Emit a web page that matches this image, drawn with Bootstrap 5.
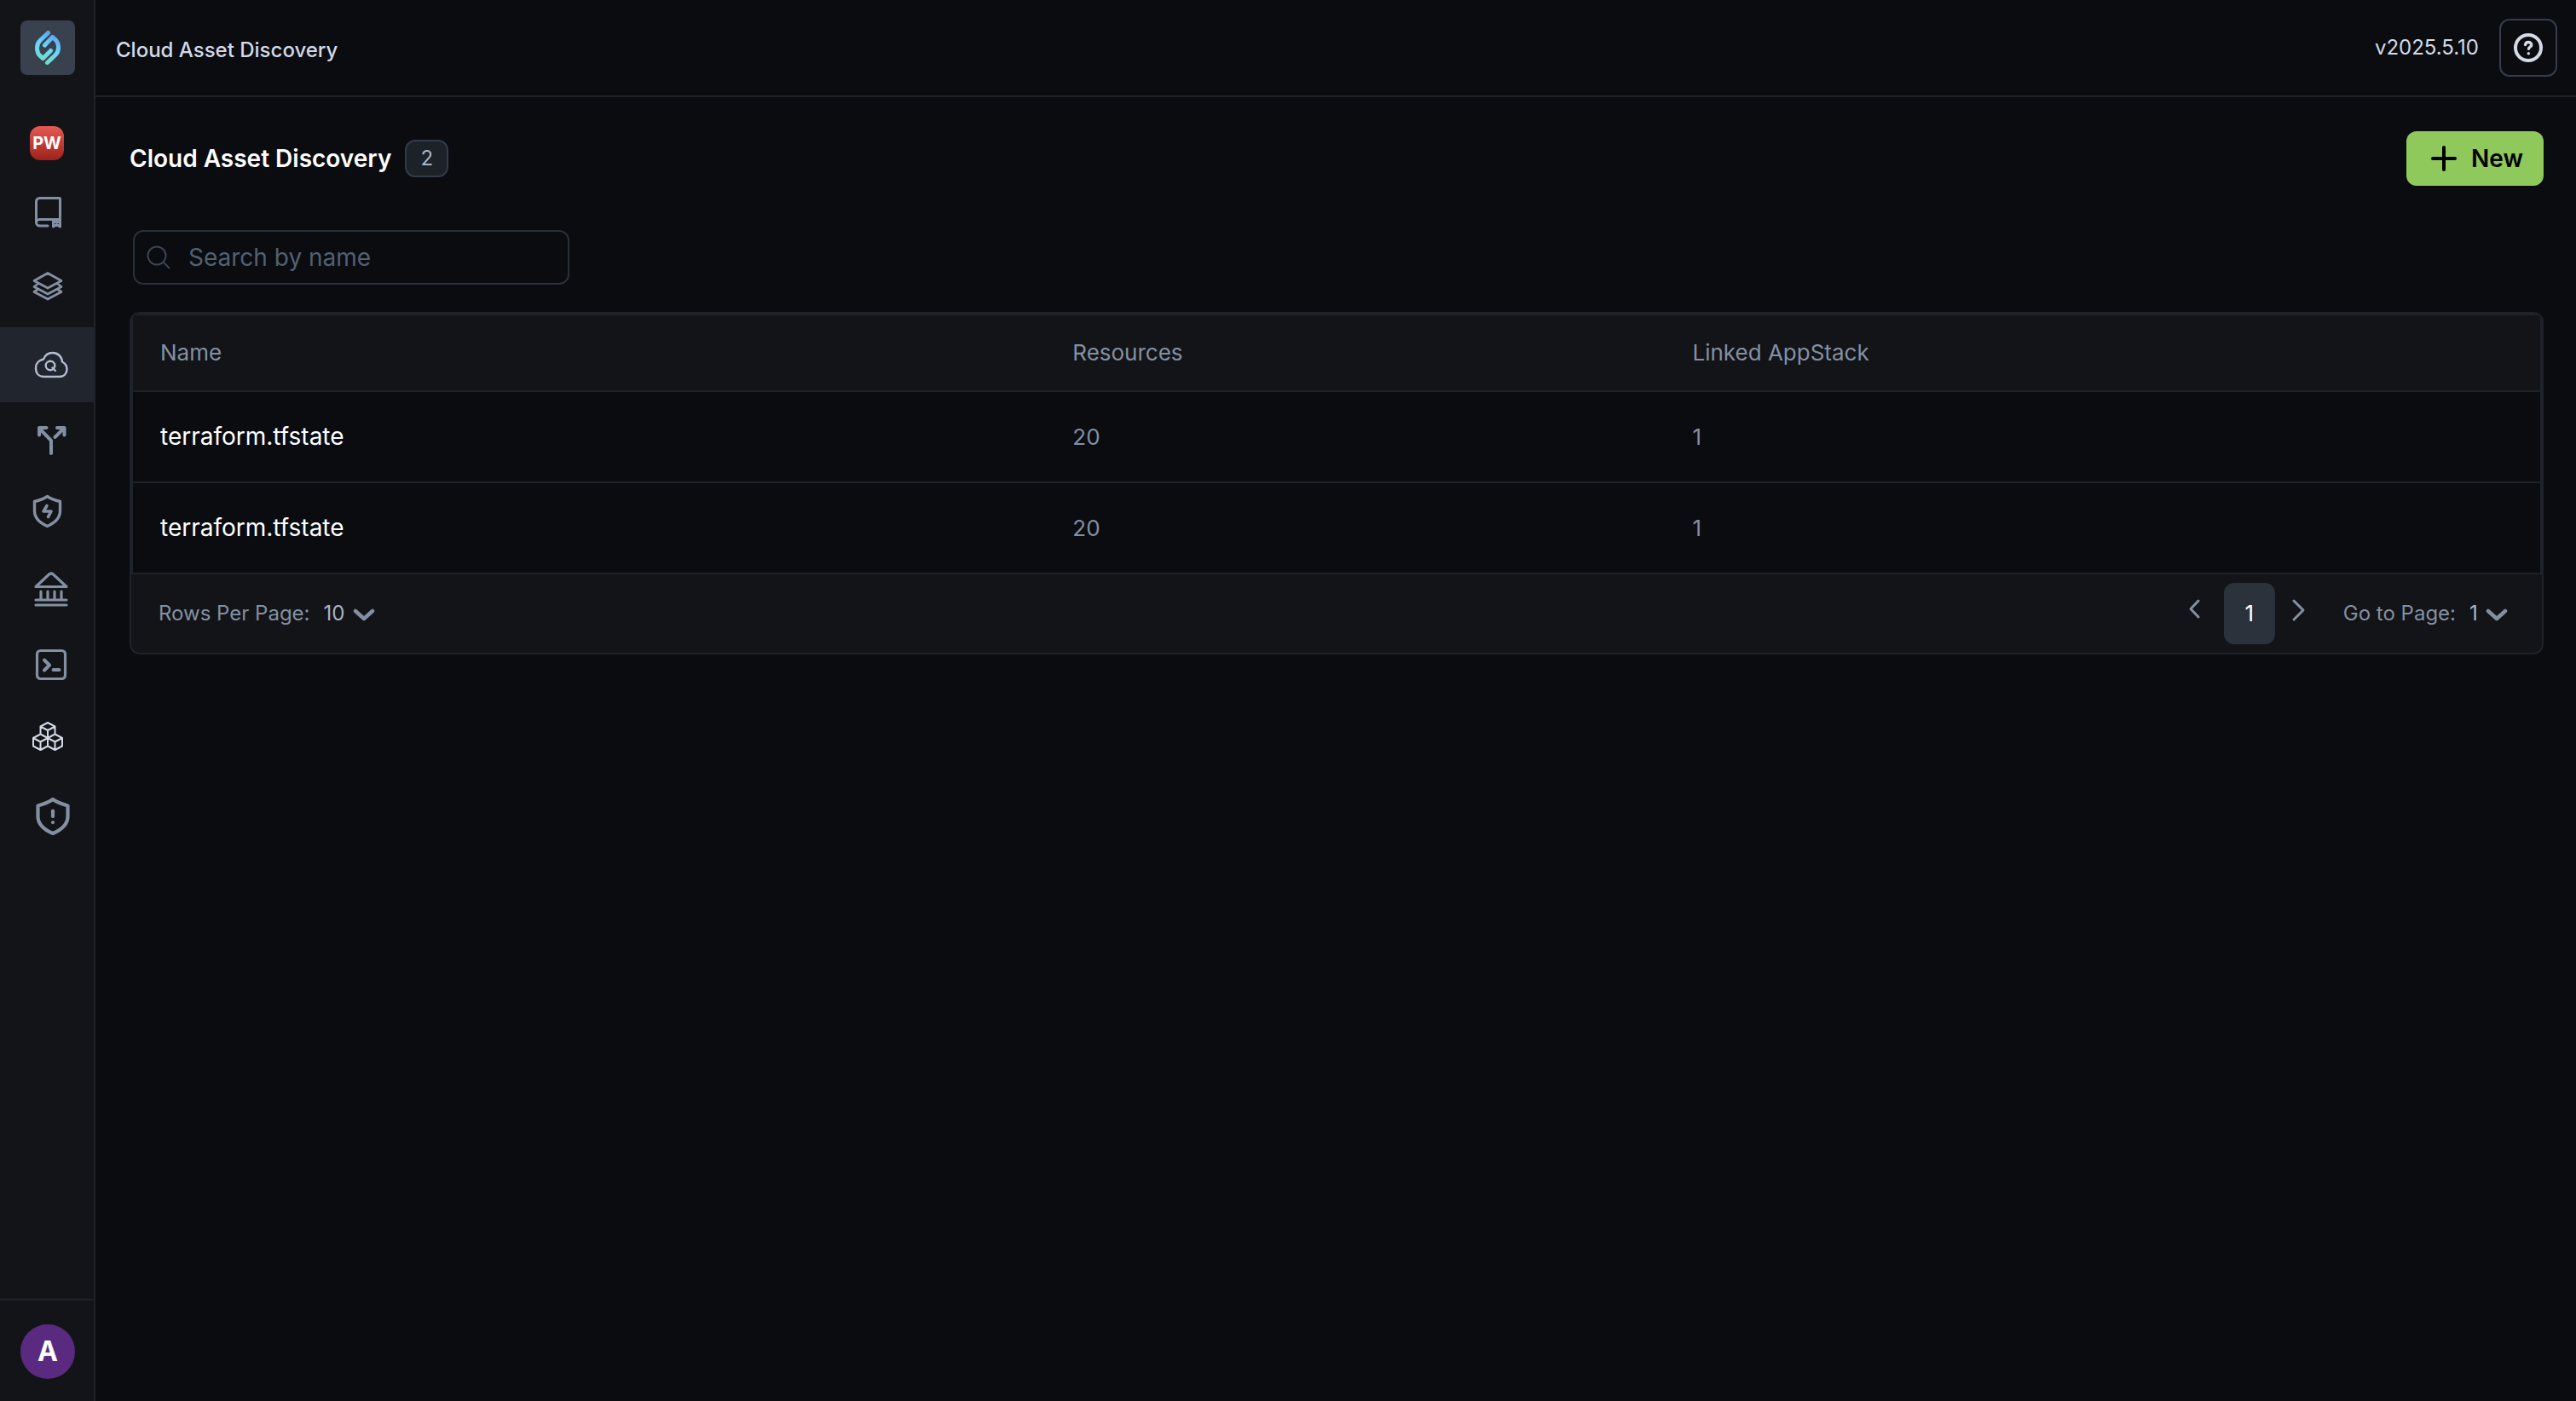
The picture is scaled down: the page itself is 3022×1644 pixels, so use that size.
<!DOCTYPE html>
<html lang="en" data-bs-theme="dark">
<head>
<meta charset="utf-8">
<meta name="viewport" content="width=device-width, initial-scale=1">
<title>Cloud Asset Discovery</title>
<link href="https://cdn.jsdelivr.net/npm/bootstrap@5.3.0/dist/css/bootstrap.min.css" rel="stylesheet">
<style>
  :root { --page: #0a0c10; --panel: #121417; --line: #1d2329; --muted: #8490a2; --soft: #a9b4c6; --pale: #d3dae6; }
  body { background: var(--page); color: var(--pale); font-family: Inter, sans-serif; font-size: 24px; line-height: 32px; }
  .side-bar { width: 112px; background: var(--panel); border-right: 2px solid var(--line); padding-top: 24px; }
  .brand-tile { width: 64px; height: 64px; border-radius: 8px; background: #39414f; margin: 0 22px 32px 24px; }
  .side-link { height: 88px; color: #8490a2; }
  .side-link.active { background: #21252e; color: #b4bdd0; }
  .side-link svg { width: 56px; height: 56px; fill: none; stroke: currentColor; stroke-linecap: round; stroke-linejoin: round; }
  .side-link .pale-icon { stroke: var(--pale); }
  .team-tag { width: 40px; height: 40px; margin-top: 8px; border-radius: 12px; background: linear-gradient(#e55a54, #9f211b); color: #fff; font-size: 20px; font-weight: 700; }
  .side-foot { border-top: 2px solid var(--line); padding: 28px 22px 26px 24px; }
  .avatar { width: 64px; height: 64px; background: #592a80; color: #fff; font-size: 32px; font-weight: 700; }
  .top-bar { height: 114px; border-bottom: 2px solid var(--line); padding: 0 22px 0 24px; }
  .crumb { font-size: 24px; font-weight: 500; line-height: 32px; padding-top: 6px; }
  .help-btn { width: 68px; height: 68px; border: 2px solid #343d49; border-radius: 12px; color: var(--pale); }
  .page-body { padding: 40px 38px 40px 40px; }
  .page-title { font-size: 28px; font-weight: 600; line-height: 36px; color: #fff; }
  .count-tag { height: 44px; min-width: 51px; border: 2px solid #333b49; border-radius: 12px; background: #1d2128; color: var(--soft); }
  .new-btn { --bs-btn-bg: #8fc95b; --bs-btn-color: #000; --bs-btn-hover-bg: #9dd56a; --bs-btn-hover-color: #000; height: 64px; border-radius: 12px; border: 0; padding: 0 24px 0 28px; font-size: 28px; font-weight: 600; gap: 16px; }
  .search-box { width: 512px; height: 64px; margin: 52px 0 32px 4px; border: 2px solid #28303a; border-radius: 12px; padding: 0 16px 0 14px; gap: 21px; }
  .search-box input { background: none; border: 0; outline: 0; color: var(--pale); font-size: 28px; min-width: 0; padding: 0; }
  .search-box input::placeholder { color: #536071; opacity: 1; }
  .asset-panel { border: 2px solid var(--line); border-radius: 12px; background: var(--panel); overflow: hidden; }
  .asset-table { --bs-table-bg: transparent; table-layout: fixed; border-collapse: separate; border-spacing: 0; border: 2px solid var(--line); border-bottom: 0; margin: 0; font-size: 26px; }
  .asset-table th, .asset-table td { padding: 0 32px; border-bottom: 2px solid var(--line); color: var(--muted); vertical-align: middle; }
  .asset-table th { font-weight: 400; height: 90px; background: var(--panel); }
  .asset-table td { height: 107px; background: var(--page); }
  .asset-table a { color: #fff; font-size: 28px; text-decoration: none; }
  .col-name { width: 37.9%; } .col-res { width: 25.75%; }
  .pager { height: 92px; padding: 0 40px 0 32px; color: var(--muted); }
  .goto-label { margin-left: 40px; }
  .pick { appearance: none; border: 0; padding: 0 35px 0 0; font-size: 24px; line-height: 32px; color: var(--soft); background: url("data:image/svg+xml,%3Csvg xmlns='http://www.w3.org/2000/svg' width='26' height='16' fill='none' stroke='%238490a2' stroke-width='4.500' stroke-linecap='round' stroke-linejoin='round'%3E%3Cpath d='M3 3l10 9 10-9'/%3E%3C/svg%3E") no-repeat right 0 bottom 6px; }
  .pick option { background: var(--panel); }
  .page-now { width: 60px; height: 72px; border: 0; border-radius: 12px; background: #2b323c; color: #fff; font-size: 26px; }
  .arrow-btn { border: 0; background: none; padding: 0 0 8px; color: var(--muted); line-height: 1; }
  .arrow-btn svg { fill: none; stroke: currentColor; stroke-width: 3; stroke-linecap: round; stroke-linejoin: round; }
</style>
</head>
<body>
<div class="d-flex min-vh-100">
  <aside class="side-bar d-flex flex-column flex-shrink-0">
    <a href="#" class="brand-tile d-flex align-items-center justify-content-center" aria-label="Home">
      <svg width="30" height="40" viewBox="0 0 30 40" fill="none" stroke="url(#lg)" stroke-width="5" stroke-linecap="round" stroke-linejoin="round">
        <defs><linearGradient id="lg" x1="24" y1="2" x2="6" y2="38" gradientUnits="userSpaceOnUse"><stop offset="0" stop-color="#5a9bf0"/><stop offset=".5" stop-color="#69d8fb"/><stop offset="1" stop-color="#72dcb8"/></linearGradient></defs>
        <path d="M15.500 2.500L6 11.500Q2.500 15 2.500 20Q2.500 26 5.500 29L9.500 32.500L18.500 23.500"/>
        <path d="M14.500 37.500L24 28.500Q27.500 25 27.500 20Q27.500 14 24.500 11L20.500 7.500L11.500 17"/>
      </svg>
    </a>
    <nav class="nav flex-column flex-nowrap" aria-label="Main">
      <a href="#" class="side-link d-flex align-items-center justify-content-center text-decoration-none"><span class="team-tag d-flex align-items-center justify-content-center">PW</span></a>
      <a href="#" class="side-link d-flex align-items-center justify-content-center" aria-label="Catalog"><svg viewBox="0 0 56 56" stroke-width="3"><path d="M29 41H19.500a4 4 0 0 1-4-4V12.500a4 4 0 0 1 4-4h23a1 1 0 0 1 1 1V42l-4-2.500-4 2.500v-8.500M43.500 33.500H19.500a4 4 0 0 0-4 4M36 36.500h7"/></svg></a>
      <a href="#" class="side-link d-flex align-items-center justify-content-center" aria-label="Stacks"><svg viewBox="0 0 56 56" stroke-width="2.800"><path d="M29 8.500L45 17.500l-16 8.500L13 17.500zM17.500 21L13 24.500l16 8.500 16-8.500-4.500-3.500M17.500 27.500L13 30.500 29 39l16-8.500-4.500-3"/></svg></a>
      <a href="#" class="side-link active d-flex align-items-center justify-content-center" aria-label="Cloud Asset Discovery" aria-current="page"><svg viewBox="0 0 56 56" stroke-width="2.400"><path d="M24.500 42C18.500 42 15 38 15 32c0-5.500 3.500-9.500 9-10.500 2-5 5.500-7.500 10.500-7.500 6.500 0 11 4.500 11.500 10.500 3.500 2 5.500 5 5.500 8.500 0 5.500-3.500 9-9 9z"/><circle cx="32" cy="29" r="5.300"/><path d="M34.500 31.500l3.500 3.500"/></svg></a>
      <a href="#" class="side-link d-flex align-items-center justify-content-center" aria-label="Flows"><svg viewBox="0 0 56 56" stroke-width="4"><path d="M33 44V29L19 14.500M19 22.500V14h8.500M40 14h8.500v8.500M48 14.500L37.500 25"/></svg></a>
      <a href="#" class="side-link d-flex align-items-center justify-content-center" aria-label="Protection"><svg viewBox="0 0 56 56" stroke-width="3.400"><path d="M28.500 6.500c4.500 3 9 4.500 15 6V23.500c0 7.500-6 14-15 18-9-4-15-10.500-15-18V12.500c6-1.500 10.500-3 15-6z"/><path d="M28 17.500L24 24h9l-3.500 6.500" stroke-width="3.600"/></svg></a>
      <a href="#" class="side-link d-flex align-items-center justify-content-center" aria-label="Governance"><svg viewBox="0 0 56 56" stroke-width="3.200"><path d="M15 24.500L30.500 10q2.500-2 5 0L51 24.500zM15 40h36M15 46h36M21 30v9M29 30v9M37 30v9M45 30v9"/></svg></a>
      <a href="#" class="side-link d-flex align-items-center justify-content-center" aria-label="Terminal"><svg viewBox="0 0 56 56" stroke-width="3.200"><rect x="16.500" y="11.500" width="33" height="33" rx="4"/><path d="M25 22.500l6 6-6 6M35.500 34h7" stroke-width="4"/></svg></a>
      <a href="#" class="side-link d-flex align-items-center justify-content-center" aria-label="Modules"><svg class="pale-icon" viewBox="0 0 56 56" stroke-width="2"><path d="M29 8l8.500 4.500v9L29 26l-8.500-4.500v-9zM20.500 12.500L29 17l8.500-4.500M29 17v18.500M20.500 21.500L12 26v9.500l8.500 4.500 8.500-4.500M12 26l8.500 4.500L29 26l8.500 4.500L46 26M20.500 30.500V40M37.500 21.500L46 26v9.500L37.500 40 29 35.500M37.500 30.500V40"/></svg></a>
      <a href="#" class="side-link d-flex align-items-center justify-content-center" aria-label="Alerts"><svg viewBox="0 0 56 56" stroke-width="4.200"><path d="M35 10c5 3.500 10.500 5.500 17.500 7.500V30c0 9-7 15.500-17.500 20-10.500-4.500-17.500-11-17.500-20V17.500C24.500 15.500 30 13.500 35 10z"/><path d="M35 23.500v6.500M35 37v.1"/></svg></a>
    </nav>
    <div class="side-foot mt-auto"><a href="#" class="avatar rounded-circle d-flex align-items-center justify-content-center text-decoration-none">A</a></div>
  </aside>

  <div class="flex-grow-1 d-flex flex-column">
    <header class="top-bar d-flex align-items-center justify-content-between">
      <div class="crumb">Cloud Asset Discovery</div>
      <div class="d-flex align-items-center gap-4">
        <span>v2025.5.10</span>
        <button type="button" class="help-btn btn p-0 d-flex align-items-center justify-content-center" aria-label="Help">
          <svg width="34" height="34" viewBox="0 0 34 34" fill="none" stroke="currentColor" stroke-width="4" stroke-linecap="round" stroke-linejoin="round"><circle cx="17" cy="17" r="15"/><path d="M13.500 13.500c.4-2 1.800-3 3.600-3 2.200 0 3.700 1.400 3.700 3.200 0 2.300-3.300 2.500-3.300 4.500M17.300 23.700v.1" stroke-width="3.400"/></svg>
        </button>
      </div>
    </header>

    <main class="page-body">
      <div class="d-flex align-items-center justify-content-between">
        <div class="d-flex align-items-center gap-3">
          <h1 class="page-title m-0">Cloud Asset Discovery</h1>
          <span class="count-tag d-flex align-items-center justify-content-center">2</span>
        </div>
        <button type="button" class="new-btn btn d-flex align-items-center">
          <svg width="32" height="32" viewBox="0 0 32 32" fill="none" stroke="currentColor" stroke-width="4" stroke-linecap="round"><path d="M16 3v26M3 16h26"/></svg>New
        </button>
      </div>

      <label class="search-box d-flex align-items-center">
        <svg class="flex-shrink-0" width="28" height="28" viewBox="0 0 28 28" fill="none" stroke="#3b4552" stroke-width="2"><circle cx="12" cy="12" r="10.500"/><path d="M19.500 19.500L27 27"/></svg>
        <input type="search" class="flex-grow-1" placeholder="Search by name" aria-label="Search by name">
      </label>

      <section class="asset-panel">
        <table class="table asset-table">
          <thead><tr><th scope="col" class="col-name">Name</th><th scope="col" class="col-res">Resources</th><th scope="col">Linked AppStack</th></tr></thead>
          <tbody>
            <tr><td><a href="#">terraform.tfstate</a></td><td>20</td><td>1</td></tr>
            <tr><td><a href="#">terraform.tfstate</a></td><td>20</td><td>1</td></tr>
          </tbody>
        </table>
        <div class="pager d-flex align-items-center justify-content-between">
          <div class="d-flex align-items-center gap-3">
            <label for="rows">Rows Per Page:</label>
            <select id="rows" class="pick"><option>10</option></select>
          </div>
          <div class="d-flex align-items-center">
            <button type="button" class="arrow-btn me-4" aria-label="Previous page"><svg width="20" height="28" viewBox="0 0 20 28"><path d="M14 3L5 12.500l9 9.500"/></svg></button>
            <button type="button" class="page-now" aria-current="page">1</button>
            <button type="button" class="arrow-btn ms-3" aria-label="Next page"><svg width="24" height="28" viewBox="0 0 24 28"><path d="M6 3l11 11L6 25"/></svg></button>
            <label for="goto" class="goto-label me-3 text-nowrap">Go to Page:</label>
            <select id="goto" class="pick"><option>1</option></select>
          </div>
        </div>
      </section>
    </main>
  </div>
</div>
<script src="https://cdn.jsdelivr.net/npm/bootstrap@5.3.0/dist/js/bootstrap.bundle.min.js"></script>
</body>
</html>
